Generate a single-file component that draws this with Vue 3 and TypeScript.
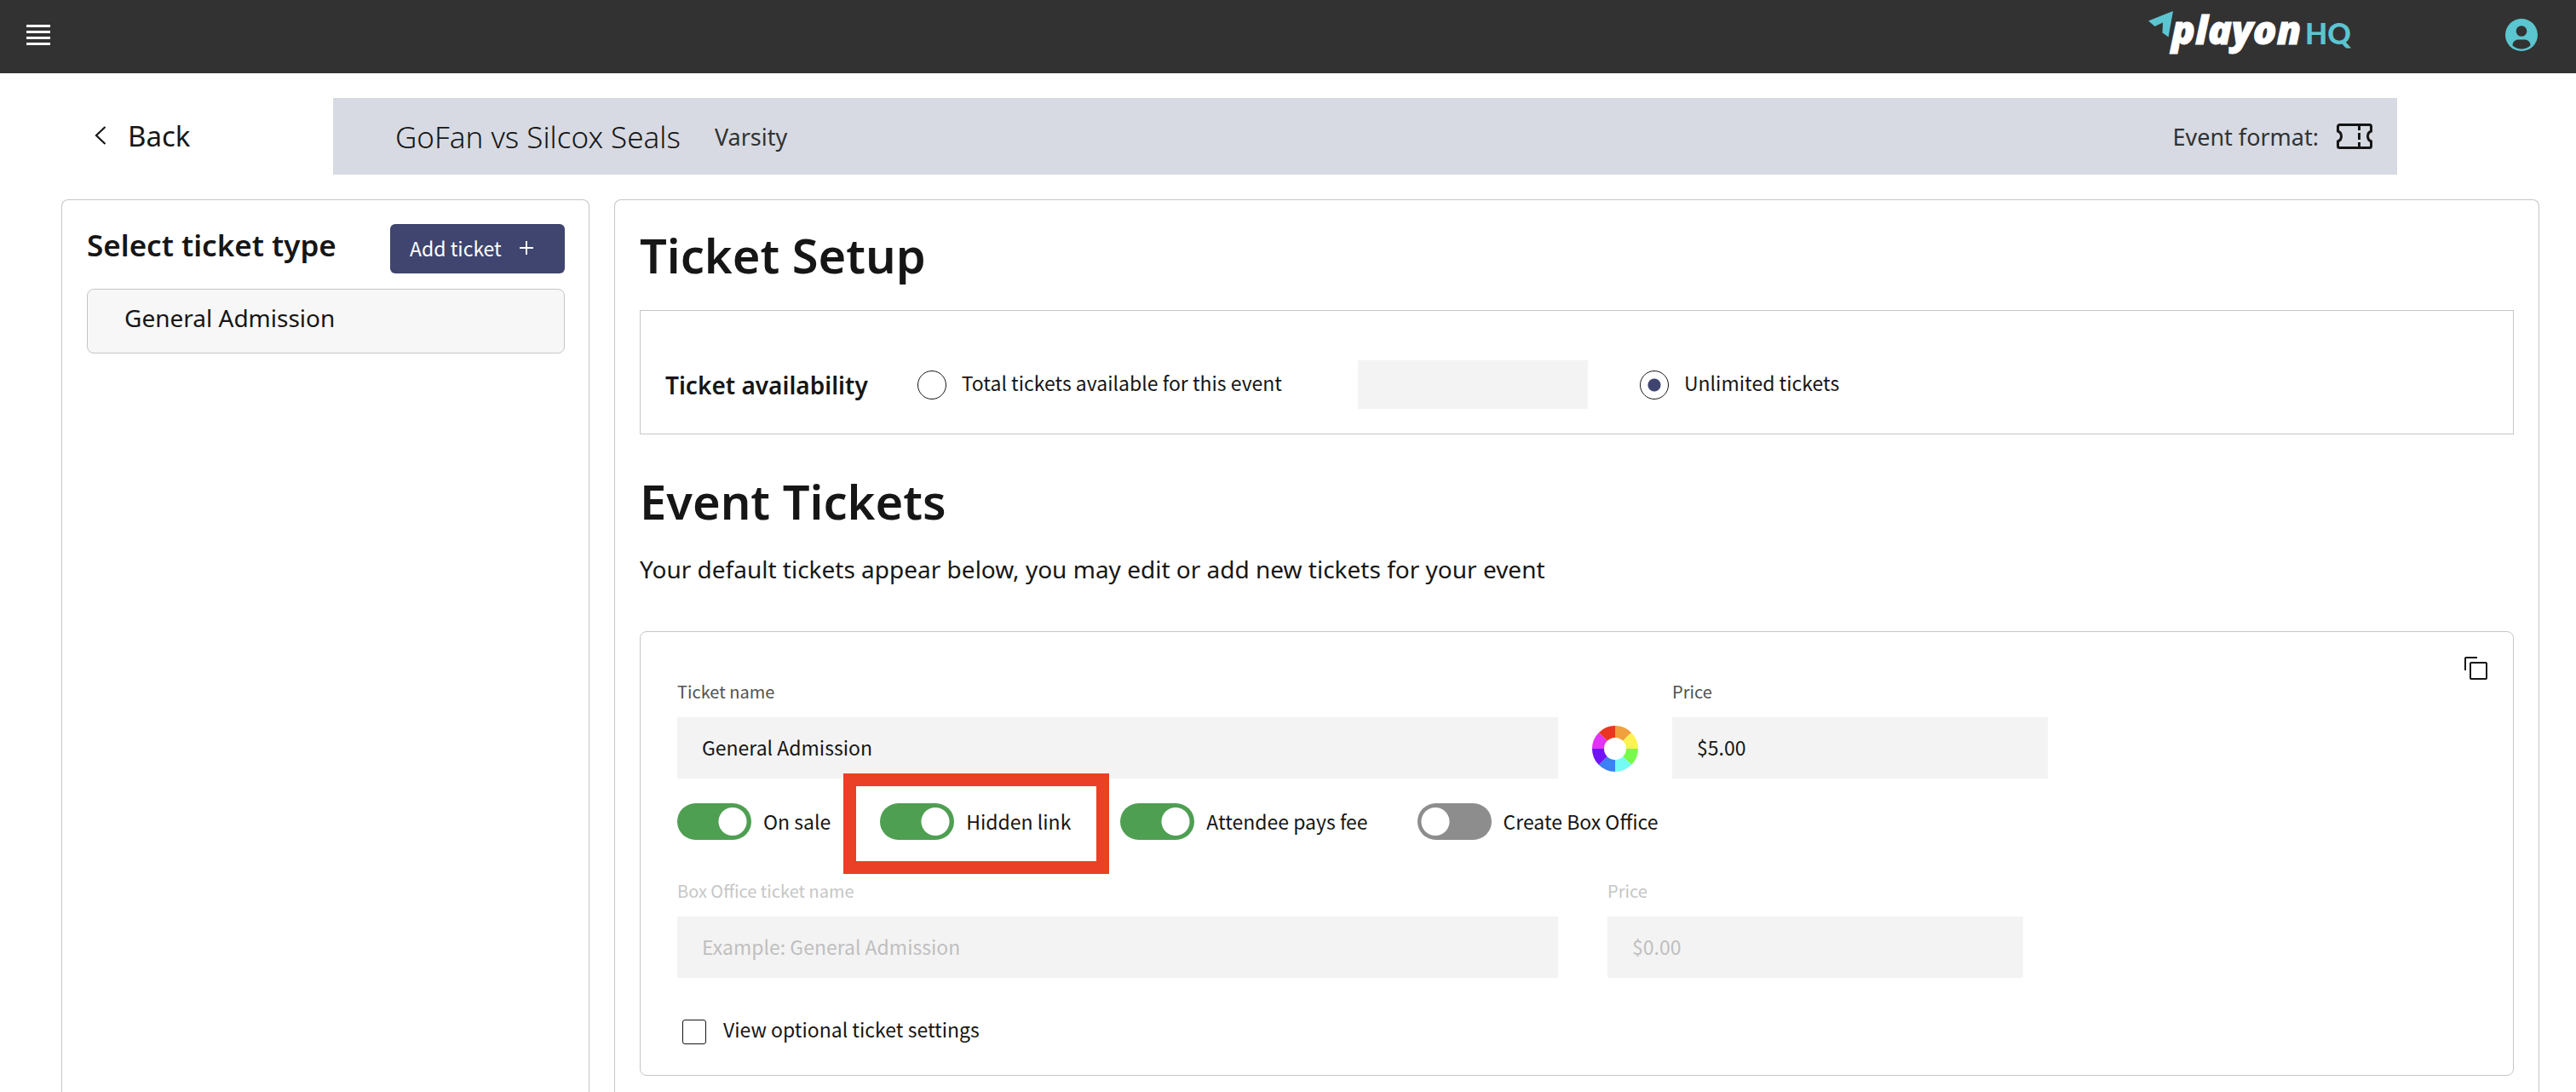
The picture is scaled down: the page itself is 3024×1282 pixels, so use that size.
<script setup lang="ts">
import { reactive, ref } from 'vue'

interface Toggle {
  id: string
  label: string
  on: boolean
  highlighted?: boolean
}

const availability = ref<'total' | 'unlimited'>('unlimited')
const ticketName = ref('General Admission')
const price = ref('$5.00')
const showOptional = ref(false)

const toggles = reactive<Toggle[]>([
  { id: 'on-sale', label: 'On sale', on: true },
  { id: 'hidden-link', label: 'Hidden link', on: true, highlighted: true },
  { id: 'attendee-fee', label: 'Attendee pays fee', on: true },
  { id: 'box-office', label: 'Create Box Office', on: false },
])

const wheelColors = ['#f0a03c', '#fdf250', '#78fa4c', '#74fbf3', '#3a80f7', '#7014f5', '#e233f6', '#ea3523']

// Path of one eighth of the colour ring, clockwise from the top.
function wedge(index: number): string {
  const point = (radius: number, step: number) => {
    const angle = (step * Math.PI) / 4 - Math.PI / 2
    return `${(27 + radius * Math.cos(angle)).toFixed(2)} ${(27 + radius * Math.sin(angle)).toFixed(2)}`
  }
  return `M${point(27, index)}A27 27 0 0 1 ${point(27, index + 1)}L${point(13, index + 1)}A13 13 0 0 0 ${point(13, index)}Z`
}
</script>

<template>
  <div class="page">
    <header class="topbar">
      <button class="icon-button" type="button" aria-label="Open menu">
        <svg width="28" height="24" viewBox="0 0 28 24" fill="#fff">
          <path d="M0 0h28v3H0zM0 7h28v3H0zM0 14h28v3H0zM0 21h28v3H0z" />
        </svg>
      </button>
      <div class="topbar-right">
        <svg class="logo" width="240" height="76" viewBox="0 -8 240 76" role="img" aria-label="playon HQ">
          <path d="M2 13.500 31 2 25.500 32.500 18.500 27.500 19 15.500 9.500 20Z" fill="#5bc5d0" />
          <text class="logo-name" x="29" y="41">playon</text>
          <text class="logo-suffix" x="186" y="41">HQ</text>
        </svg>
        <button class="icon-button" type="button" aria-label="Account">
          <svg width="38" height="38" viewBox="0 0 38 38">
            <circle cx="19" cy="19" r="19" fill="#5bc5d0" />
            <circle cx="19" cy="14.500" r="6.300" fill="#323232" />
            <path d="M8.500 31.500C8.500 27 12 24.500 15.500 24.500h7c3.500 0 7 2.500 7 7C26.500 34 23 35.500 19 35.500S11.500 34 8.500 31.500Z" fill="#323232" />
          </svg>
        </button>
      </div>
    </header>

    <div class="event-row">
      <a class="back" href="#">
        <svg width="14" height="22" viewBox="0 0 14 22" fill="none" stroke="#161616" stroke-width="2.200">
          <path d="M12.500 1 2 11l10.500 10" />
        </svg>
        Back
      </a>
      <div class="event-bar">
        <h1>GoFan vs Silcox Seals</h1>
        <span class="event-level">Varsity</span>
        <span class="event-format">Event format:</span>
        <svg width="42" height="30" viewBox="0 0 42 30" fill="none" stroke="#161616" stroke-width="3">
          <path d="M3.500 1.500h35a2 2 0 0 1 2 2V9a6.500 6.500 0 0 0 0 12v5.500a2 2 0 0 1-2 2h-35a2 2 0 0 1-2-2V21a6.500 6.500 0 0 0 0-12V3.500a2 2 0 0 1 2-2Z" />
          <path d="M26.500 3v5M26.500 11v8M26.500 22v5" />
        </svg>
      </div>
    </div>

    <div class="columns">
      <aside class="panel sidebar">
        <div class="sidebar-head">
          <h2>Select ticket type</h2>
          <button class="add" type="button">
            Add ticket
            <svg width="16" height="16" viewBox="0 0 16 16" stroke="#fff" stroke-width="2">
              <path d="M8 0v16M0 8h16" />
            </svg>
          </button>
        </div>
        <button class="ticket-type" type="button">General Admission</button>
      </aside>

      <main class="panel content">
        <h2>Ticket Setup</h2>
        <section class="availability">
          <h3>Ticket availability</h3>
          <label class="choice">
            <input v-model="availability" type="radio" name="availability" value="total" />
            <span>Total tickets available for this event</span>
          </label>
          <input class="field total" type="text" aria-label="Total tickets" :disabled="availability !== 'total'" />
          <label class="choice">
            <input v-model="availability" type="radio" name="availability" value="unlimited" />
            <span>Unlimited tickets</span>
          </label>
        </section>

        <h2 class="tickets-title">Event Tickets</h2>
        <p class="intro">Your default tickets appear below, you may edit or add new tickets for your event</p>

        <section class="card">
          <div class="card-tools">
            <button class="icon-button" type="button" aria-label="Duplicate ticket">
              <svg width="27" height="27" viewBox="0 0 27 27" fill="none" stroke="#161616" stroke-width="2">
                <rect x="7" y="7" width="19" height="19" rx="1" />
                <path d="M1 16V2a1 1 0 0 1 1-1h13" />
              </svg>
            </button>
          </div>

          <div class="fields">
            <div class="labelled">
              <label for="ticket-name">Ticket name</label>
              <input id="ticket-name" v-model="ticketName" class="field" type="text" />
            </div>
            <button class="icon-button wheel" type="button" aria-label="Ticket colour">
              <svg width="54" height="54" viewBox="0 0 54 54">
                <path v-for="(color, i) in wheelColors" :key="color" :d="wedge(i)" :fill="color" />
              </svg>
            </button>
            <div class="labelled">
              <label for="price">Price</label>
              <input id="price" v-model="price" class="field" type="text" />
            </div>
          </div>

          <div class="toggles">
            <label v-for="t in toggles" :key="t.id" class="toggle" :class="{ highlighted: t.highlighted }">
              <input v-model="t.on" type="checkbox" role="switch" />
              <span>{{ t.label }}</span>
            </label>
          </div>

          <div class="fields box-office">
            <div class="labelled">
              <label for="box-name">Box Office ticket name</label>
              <input id="box-name" class="field" type="text" placeholder="Example: General Admission" disabled />
            </div>
            <div class="labelled">
              <label for="box-price">Price</label>
              <input id="box-price" class="field" type="text" placeholder="$0.00" disabled />
            </div>
          </div>

          <label class="optional">
            <input v-model="showOptional" type="checkbox" />
            <span>View optional ticket settings</span>
          </label>
        </section>
      </main>
    </div>
  </div>
</template>

<style>
body {
  background: #fff;
}
</style>

<style scoped>
* {
  box-sizing: border-box;
}

.page {
  display: flex;
  flex-direction: column;
  min-height: 100vh;
  color: #161616;
  font-family: 'Noto Sans', Roboto, sans-serif;
}

h1,
h2,
h3,
p {
  margin: 0;
}

svg {
  display: block;
  flex: none;
}

button,
input {
  margin: 0;
  border: 0;
  color: inherit;
  font: inherit;
}

.icon-button {
  padding: 0;
  background: none;
}

.topbar {
  display: flex;
  align-items: center;
  justify-content: space-between;
  height: 86px;
  padding: 0 45px 4px 31px;
  background: #323232;
}

.topbar-right {
  display: flex;
  align-items: center;
  gap: 181px;
}

.logo-name {
  fill: #fff;
  stroke: #fff;
  stroke-width: 1px;
  font: italic 800 46px 'Open Sans', sans-serif;
}

.logo-suffix {
  fill: #5bc5d0;
  font: 900 34px Lato, sans-serif;
}

.event-row {
  display: flex;
  margin: 29px 210px 29px 0;
}

.back {
  display: flex;
  align-items: center;
  gap: 25px;
  width: 391px;
  padding: 0 0 2px 111px;
  color: #161616;
  font-size: 33px;
  text-decoration: none;
}

.event-bar {
  display: flex;
  flex: 1;
  align-items: center;
  height: 90px;
  padding: 0 29px 0 73px;
  background: #d7dae2;
  color: #323232;
  font-size: 27px;
}

.event-bar h1 {
  margin-right: 40px;
  color: #161616;
  font-size: 35px;
  font-weight: 300;
}

.event-format {
  margin: 0 21px 0 auto;
}

.columns {
  display: flex;
  flex: 1;
  gap: 29px;
  margin: 0 43px 0 72px;
}

.panel {
  border: 1px solid #c6c6c6;
  border-bottom: 0;
  border-radius: 8px 8px 0 0;
}

.sidebar {
  flex: none;
  width: 620px;
  padding: 28px 28px 28px 29px;
}

.sidebar-head {
  display: flex;
  justify-content: space-between;
}

.sidebar h2 {
  font-size: 35px;
  font-weight: 600;
  line-height: 50px;
}

.add {
  display: flex;
  align-items: center;
  justify-content: space-between;
  width: 205px;
  height: 58px;
  padding: 0 37px 2px 23px;
  border-radius: 6px;
  background: #3f456f;
  color: #fff;
  font-family: 'Noto Sans CJK JP', sans-serif;
  font-size: 23px;
}

.ticket-type {
  width: 100%;
  height: 76px;
  margin-top: 18px;
  padding: 0 43px 8px;
  border: 1px solid #c6c6c6;
  border-radius: 8px;
  background: #f7f7f7;
  font-size: 28px;
  text-align: left;
}

.content {
  flex: 1;
  padding: 30px 29px 19px;
}

.content h2 {
  font-size: 56px;
  font-weight: 600;
  line-height: 68px;
}

.availability {
  display: flex;
  align-items: center;
  margin-top: 31px;
  padding: 58px 29px 29px;
  border: 1px solid #c6c6c6;
}

.availability h3 {
  margin-right: 58px;
  font-size: 28px;
  font-weight: 600;
}

.choice,
.toggle,
.optional,
.labelled,
.field {
  font-family: 'Noto Sans CJK JP', sans-serif;
  font-size: 23px;
}

.choice {
  display: flex;
  align-items: center;
  gap: 18px;
}

.choice span {
  padding-bottom: 6px;
  line-height: 36px;
}

.choice input {
  appearance: none;
  width: 34px;
  height: 34px;
  border: 1px solid #161616;
  border-radius: 50%;
}

.choice input:checked {
  background: radial-gradient(circle, #3f456f 7px, transparent 8px);
}

.field {
  width: 100%;
  height: 72px;
  padding: 0 29px 2px;
  border-radius: 0;
  background: #f3f3f3;
}

.field::placeholder {
  color: #bfbfbf;
  opacity: 1;
}

.total {
  width: 270px;
  height: 57px;
  margin: 0 61px 0 89px;
}

.content .tickets-title {
  margin-top: 44px;
}

.intro {
  margin: 26px 0 53px;
  font-size: 28px;
  line-height: 40px;
}

.card {
  padding: 29px 43px 36px;
  border: 1px solid #c6c6c6;
  border-radius: 8px;
}

.card-tools {
  display: flex;
  justify-content: flex-end;
  margin-right: -13px;
}

.fields {
  display: grid;
  grid-template-columns: 1034fr 54px 441fr 463fr;
  column-gap: 40px;
  align-items: end;
}

.wheel {
  margin-bottom: 8px;
}

.labelled label {
  display: block;
  margin-bottom: 16px;
  color: #525252;
  font-size: 20px;
  line-height: 28px;
}

.labelled .field {
  display: block;
}

.toggles {
  display: flex;
  gap: 58px;
  margin-top: 29px;
}

.toggle {
  position: relative;
  display: flex;
  align-items: center;
  gap: 14px;
  line-height: 43px;
}

.toggle input {
  appearance: none;
  width: 87px;
  height: 43px;
  border-radius: 22px;
  background: radial-gradient(circle at 21px 50%, #fff 16px, transparent 17px) #8d8d8d;
}

.toggle input:checked {
  background: radial-gradient(circle at 65px 50%, #fff 16px, transparent 17px) #4f9f52;
}

.highlighted::after {
  position: absolute;
  inset: -35px -45px -40px -43px;
  border: 15px solid #ea4025;
  content: '';
  pointer-events: none;
}

.box-office {
  grid-template-columns: 1034fr 488fr 474fr;
  column-gap: 58px;
  margin-top: 46px;
}

.box-office label {
  color: #c6c6c6;
}

.optional {
  display: flex;
  gap: 20px;
  margin: 49px 0 0 6px;
  line-height: 22px;
}

.optional input {
  appearance: none;
  width: 28px;
  height: 29px;
  border: 1px solid #161616;
  border-radius: 3px;
}
</style>
